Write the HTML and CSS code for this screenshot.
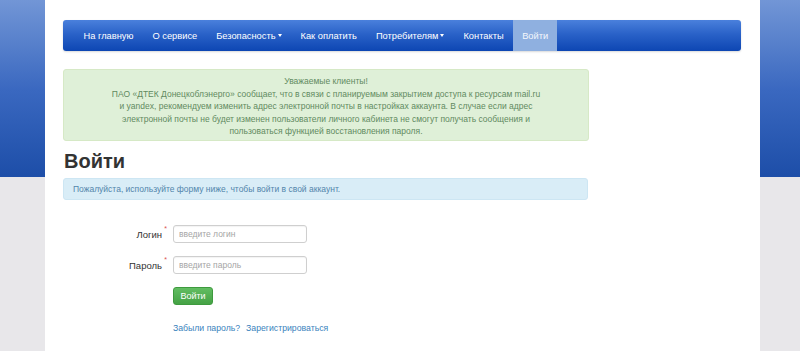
FILE: index.html
```html
<!DOCTYPE html>
<html lang="ru">
<head>
<meta charset="utf-8">
<title>Войти</title>
<link rel="stylesheet" href="styles.css">
</head>
<body>
<div class="page">
  <nav class="navbar">
    <ul class="nav">
      <li><a href="#">На главную</a></li>
      <li><a href="#">О сервисе</a></li>
      <li><a href="#">Безопасность<span class="caret"></span></a></li>
      <li><a href="#">Как оплатить</a></li>
      <li><a href="#">Потребителям<span class="caret"></span></a></li>
      <li><a href="#">Контакты</a></li>
      <li class="active"><a href="#">Войти</a></li>
    </ul>
  </nav>
  <div class="alert-success">
    Уважаемые клиенты!<br>
    ПАО «ДТЕК Донецкоблэнерго» сообщает, что в связи с планируемым закрытием доступа к ресурсам mail.ru<br>
    и yandex, рекомендуем изменить адрес электронной почты в настройках аккаунта. В случае если адрес<br>
    электронной почты не будет изменен пользователи личного кабинета не смогут получать сообщения и<br>
    пользоваться функцией восстановления пароля.
  </div>
  <h1 class="title">Войти</h1>
  <div class="alert-info">Пожалуйста, используйте форму ниже, чтобы войти в свой аккаунт.</div>
  <form class="login-form">
    <div class="row">
      <label class="label">Логин<span class="req">*</span></label>
      <input class="input" type="text" placeholder="введите логин">
    </div>
    <div class="row">
      <label class="label">Пароль<span class="req">*</span></label>
      <input class="input" type="password" placeholder="введите пароль">
    </div>
    <div class="row">
      <span class="label"></span>
      <button class="btn" type="button">Войти</button>
    </div>
    <div class="row links">
      <span class="label"></span>
      <a href="#">Забыли пароль?</a>
      <a href="#">Зарегистрироваться</a>
    </div>
  </form>
</div>
</body>
</html>
```

FILE: styles.css
```css
html, body {
  margin: 0;
  padding: 0;
}
body {
  font-family: "Liberation Sans", Arial, sans-serif;
  background: linear-gradient(to bottom, #7296d6 0px, #3a68c0 90px, #1d4ea8 177px, #e8e7ea 177px, #e8e7ea 100%);
  height: 351px;
  overflow: hidden;
}
.page {
  margin-left: 45px;
  width: 715px;
  height: 351px;
  background: #fff;
  padding: 20px 19px 0 18px;
  box-sizing: border-box;
}
.navbar {
  height: 31px;
  background: linear-gradient(to bottom, #4a80dc 0%, #2a62c8 45%, #0d46b3 100%);
  border-radius: 3px;
  padding-left: 11px;
  box-shadow: 0 1px 2px rgba(0,0,0,0.15);
}
.nav {
  list-style: none;
  margin: 0;
  padding: 0;
  display: flex;
  height: 31px;
}
.nav li {
  display: flex;
}
.nav a {
  display: flex;
  align-items: center;
  padding: 0 9.5px;
  color: #fff;
  font-size: 9.3px;
  text-decoration: none;
  height: 31px;
}
.nav li.active a {
  background: #8fb0e0;
  color: #f4f7fc;
  padding: 0 9px 0 9px;
}
.caret {
  display: inline-block;
  width: 0;
  height: 0;
  margin-left: 2px;
  border-top: 3px solid #fff;
  border-left: 2.5px solid transparent;
  border-right: 2.5px solid transparent;
}
.alert-success {
  margin-top: 18px;
  width: 526px;
  box-sizing: border-box;
  background: #dff0d8;
  border: 1px solid #d6e9c6;
  border-radius: 3px;
  color: #5f8a5f;
  font-size: 8.5px;
  line-height: 12.6px;
  text-align: center;
  padding: 5px 6px 4px;
  height: 72px;
}
.title {
  margin: 7px 0 0 1px;
  font-size: 20px;
  line-height: 26px;
  font-weight: bold;
  color: #333;
}
.alert-info {
  margin-top: 4px;
  width: 525px;
  height: 22px;
  box-sizing: border-box;
  background: #d9edf7;
  border: 1px solid #cde6f3;
  border-radius: 3px;
  color: #5285ab;
  font-size: 8.5px;
  line-height: 20px;
  padding-left: 9px;
}
.login-form {
  margin-top: 25px;
  display: flex;
  flex-direction: column;
}
.row {
  display: flex;
  align-items: center;
  height: 18px;
  margin-bottom: 13px;
}
.label {
  width: 103px;
  flex: none;
  text-align: right;
  font-size: 9.5px;
  color: #333;
  margin-right: 7px;
  position: relative;
  padding-right: 4px;
  box-sizing: border-box;
}
.req {
  color: #d9534f;
  font-size: 7px;
  position: absolute;
  right: -1px;
  top: -4px;
}
.input {
  width: 134px;
  height: 18px;
  box-sizing: border-box;
  border: 1px solid #cfcfcf;
  border-radius: 3px;
  padding: 0 5px;
  font-family: "Liberation Sans", Arial, sans-serif;
  font-size: 8.5px;
  color: #555;
  box-shadow: inset 0 1px 1px rgba(0,0,0,0.05);
}
.input::placeholder {
  color: #a5a5a5;
}
.btn {
  width: 40px;
  height: 18px;
  padding: 0;
  border: 1px solid #3e9a3e;
  border-radius: 3px;
  background: linear-gradient(to bottom, #62bd62 0%, #45a245 100%);
  color: #fff;
  font-family: "Liberation Sans", Arial, sans-serif;
  font-size: 9px;
}
.row.links {
  margin-top: 1px;
}
.links a {
  color: #3a83bd;
  font-size: 8.7px;
  text-decoration: none;
  margin-right: 6px;
}
```
